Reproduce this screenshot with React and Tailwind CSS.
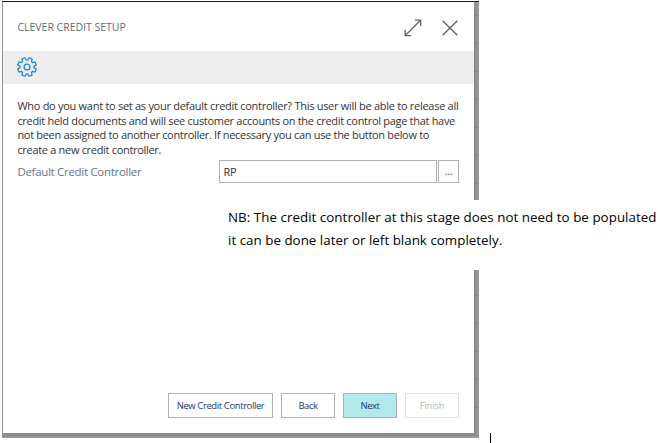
function Gear() {
  const pts = [];
  const teeth = 8;
  for (let i = 0; i < teeth; i++) {
    const c = (i * 2 * Math.PI) / teeth + Math.PI / 8;
    [[-0.3, 7], [-0.17, 9.5], [0.17, 9.5], [0.3, 7]].forEach(([d, r]) => {
      pts.push(`${(10 + r * Math.cos(c + d)).toFixed(2)},${(10 + r * Math.sin(c + d)).toFixed(2)}`);
    });
  }
  return (
    <svg width="20" height="20" viewBox="0 0 20 20" fill="none" stroke="#2588d0" strokeWidth="1.3" strokeLinejoin="round">
      <polygon points={pts.join(" ")} />
      <circle cx="10" cy="10" r="2.9" />
    </svg>
  );
}

function ExpandIcon() {
  return (
    <svg width="18" height="18" viewBox="0 0 18 18" fill="none" stroke="#666" strokeWidth="1.3">
      <path d="M1.3 16.5 16.5 1.3M10.8 1.2h5.9v5.9M1.2 10.8v5.9h5.9" />
    </svg>
  );
}

function CloseIcon() {
  return (
    <svg width="16" height="16" viewBox="0 0 16 16" fill="none" stroke="#5c5c5c" strokeWidth="1.3">
      <path d="M.7.7 15.3 15.3M15.3.7.7 15.3" />
    </svg>
  );
}

export default function App() {
  return (
    <div className="relative h-[443px] w-[658px] overflow-hidden bg-white font-['Open_Sans','Noto_Sans',sans-serif]">
      <div className="flex h-[438px] w-[479px] flex-col pl-[2px] pt-px">
        <div className="flex min-h-0 flex-1 flex-col border-t border-[#202020] bg-[linear-gradient(#8b8d8d_1px,transparent_1px)] bg-[#989a9a] bg-[length:100%_28px] bg-[position:0_13px]">
          <div className="mb-[5px] mr-[5px] flex min-h-0 flex-1 flex-col border-l border-[#949494] bg-white shadow-[1px_1px_3px_rgba(0,0,0,0.2)]">
            <header className="flex h-[49px] shrink-0 items-center justify-between pl-[14.5px] pr-[16.5px]">
              <h1 className="pt-[3px] text-[10.5px] tracking-[-0.02px] text-[#606b7b]">CLEVER CREDIT SETUP</h1>
              <div className="flex items-center gap-[20px] pt-[3px]">
                <ExpandIcon />
                <CloseIcon />
              </div>
            </header>
            <div className="flex h-[33px] shrink-0 items-center bg-[#ededed] pb-px pl-[14px]">
              <Gear />
            </div>
            <main className="flex flex-1 flex-col pl-[14.4px] pt-[15px]">
              <div className="whitespace-nowrap text-[11px] leading-[14.7px] text-[#333]">
                <p className="tracking-[-0.28px]">Who do you want to set as your default credit controller? This user will be able to release all</p>
                <p className="tracking-[-0.3px]">credit held documents and will see customer accounts on the credit control page that have</p>
                <p className="tracking-[-0.31px]">not been assigned to another controller. If necessary you can use the button below to</p>
                <p className="tracking-[-0.31px]">create a new credit controller.</p>
              </div>
              <div className="mt-[2px] flex h-[23px] items-center">
                <span className="w-[202px] pt-px text-[11.5px] tracking-[-0.3px] text-[#66758b]">Default Credit Controller</span>
                <div className="flex h-[23px] w-[218px] items-center border border-[#b0b0b0] pl-[3px] pt-px text-[11px] tracking-[-0.3px] text-[#333]">RP</div>
                <div className="ml-px flex h-[23px] w-[21px] items-center justify-center border border-[#b0b0b0] text-[10px] text-[#333]">...</div>
              </div>
            </main>
            <footer className="flex shrink-0 gap-2 pb-[15px] pl-[165px] text-[9.5px] tracking-[-0.45px] text-[#233a69]">
              <button className="h-[25px] w-[105px] whitespace-nowrap border border-[#b0b0b0] pt-px tracking-[-0.4px]">New Credit Controller</button>
              <button className="h-[25px] w-[54px] border border-[#b0b0b0] pt-px">Back</button>
              <button className="h-[25px] w-[54px] border border-[#a3b3b5] bg-[#b1e9ed] pt-px">Next</button>
              <button className="h-[25px] w-[54px] border border-[#e2e2e2] pt-px tracking-[-0.2px] text-[#b8b8b8]">Finish</button>
            </footer>
          </div>
        </div>
      </div>
      <div className="absolute left-[220px] top-[200px] h-[70px] w-[438px] whitespace-nowrap bg-white pl-2 pt-[6px] text-[13.33px] leading-[23px] text-black">
        <p className="tracking-[0.05px]">NB: The credit controller at this stage does not need to be populated</p>
        <p className="tracking-[0.03px]">it can be done later or left blank completely.</p>
      </div>
      <div className="absolute left-[490px] top-[433px] h-[10px] w-px bg-black" />
    </div>
  );
}
